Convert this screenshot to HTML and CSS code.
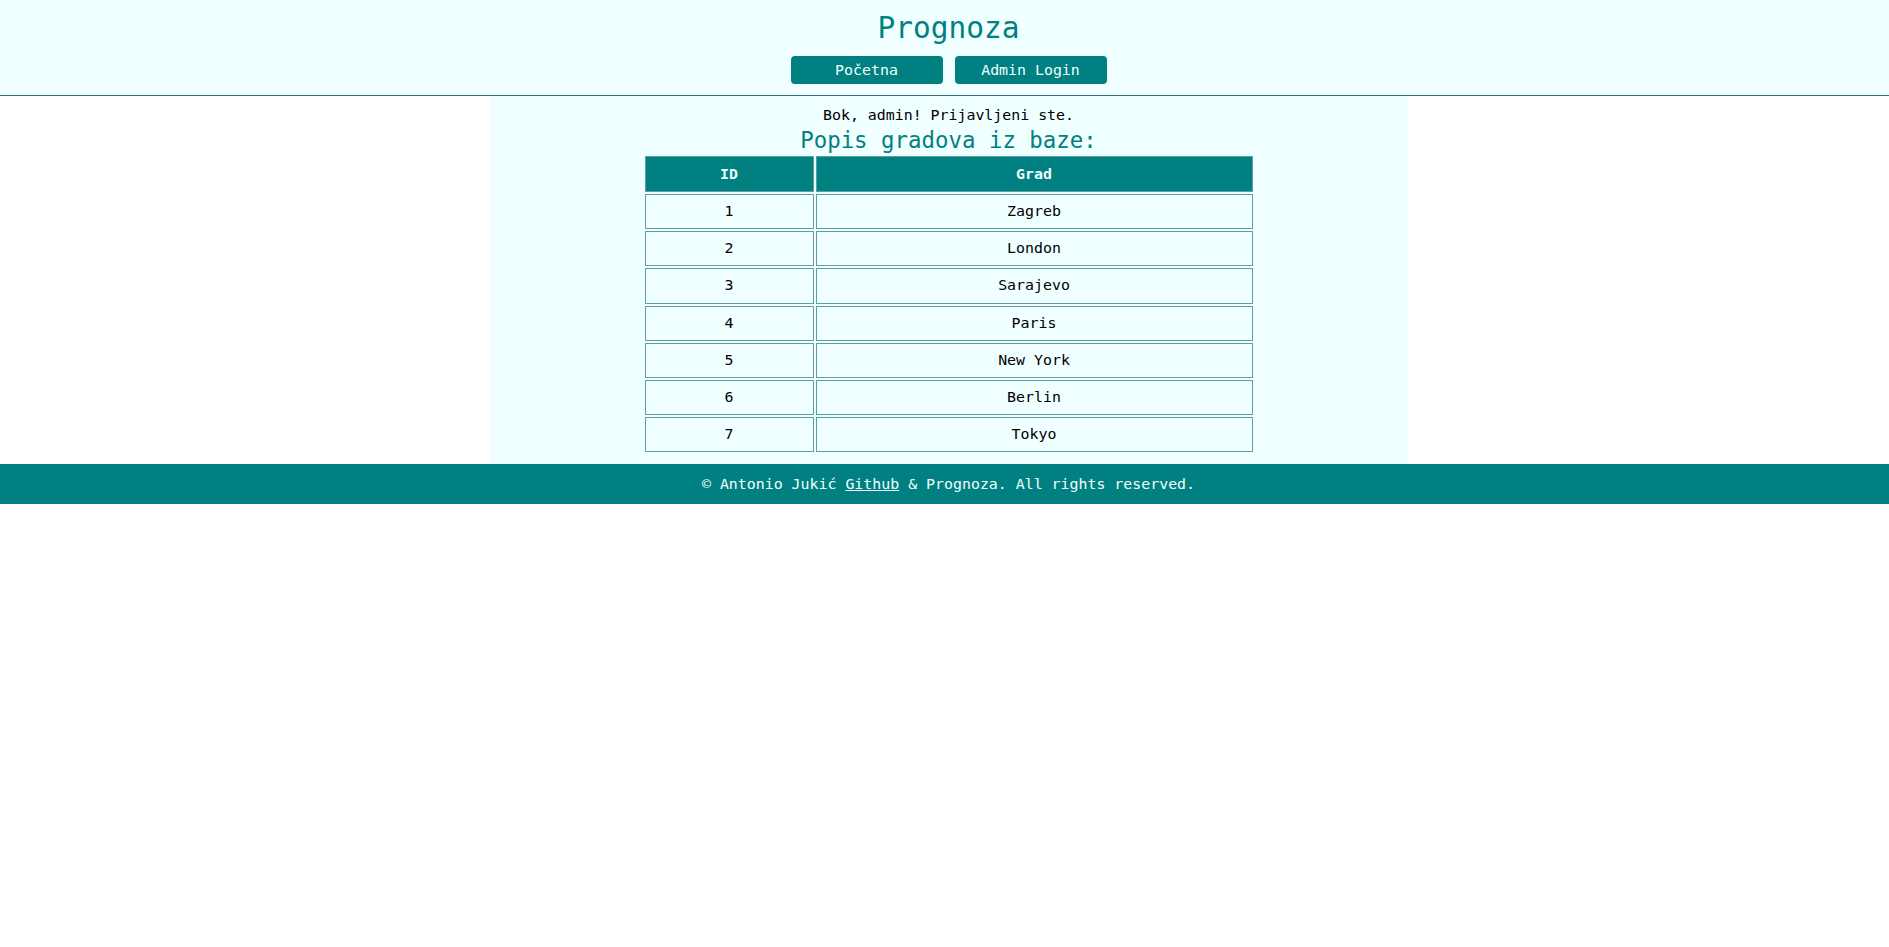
FILE: index.html
```html
<!DOCTYPE html>
<html lang="hr">
<head>
<meta charset="utf-8">
<title>Prognoza</title>
<link rel="stylesheet" href="styles.css">
</head>
<body>
<header class="site-header">
  <h1 class="site-title">Prognoza</h1>
  <nav class="nav">
    <a class="nav-btn" href="#">Početna</a>
    <a class="nav-btn" href="#">Admin Login</a>
  </nav>
</header>
<main class="panel">
  <p class="greeting">Bok, admin! Prijavljeni ste.</p>
  <h2 class="panel-title">Popis gradova iz baze:</h2>
  <table class="cities">
    <colgroup>
      <col class="col-id">
      <col class="col-city">
    </colgroup>
    <thead>
      <tr><th>ID</th><th>Grad</th></tr>
    </thead>
    <tbody>
      <tr><td>1</td><td>Zagreb</td></tr>
      <tr><td>2</td><td>London</td></tr>
      <tr><td>3</td><td>Sarajevo</td></tr>
      <tr><td>4</td><td>Paris</td></tr>
      <tr><td>5</td><td>New York</td></tr>
      <tr><td>6</td><td>Berlin</td></tr>
      <tr><td>7</td><td>Tokyo</td></tr>
    </tbody>
  </table>
</main>
<footer class="site-footer">
  © Antonio Jukić <a class="footer-link" href="#">Github</a> &amp; Prognoza. All rights reserved.
</footer>
</body>
</html>
```

FILE: styles.css
```css
html, body {
  margin: 0;
  padding: 0;
  background: #ffffff;
}

body {
  font-family: "DejaVu Sans Mono", "Liberation Mono", monospace;
  font-size: 14.9px;
  color: #000000;
}

.site-header {
  background: #f0ffff;
  border-bottom: 1px solid #2f6f6f;
  padding: 11px 0 11px 8px;
  display: flex;
  flex-direction: column;
  align-items: center;
}

.site-title {
  margin: 0;
  font-size: 29.5px;
  line-height: 34px;
  font-weight: normal;
  color: #008080;
}

.nav {
  margin-top: 11px;
  display: flex;
  gap: 12px;
}

.nav-btn {
  display: flex;
  align-items: center;
  justify-content: center;
  width: 152px;
  height: 28px;
  border-radius: 4px;
  background: #008080;
  color: #f0ffff;
  text-decoration: none;
  font-size: 14.9px;
}

.panel {
  width: 918px;
  margin: 0 auto;
  position: relative;
  left: 4px;
  background: #f0ffff;
  padding: 10px 0 10px;
  display: flex;
  flex-direction: column;
  align-items: center;
}

.greeting {
  margin: 0;
  line-height: 19px;
}

.panel-title {
  margin: 1px 0 0;
  font-size: 22.4px;
  line-height: 28px;
  font-weight: normal;
  color: #008080;
}

.cities {
  width: 612px;
  table-layout: fixed;
  border-collapse: separate;
  border-spacing: 2px;
}

.col-id { width: 169px; }
.col-city { width: 437px; }

.cities th,
.cities td {
  border: 1px solid #5f9ea0;
  padding: 0;
  text-align: center;
}

.cities th {
  background: #008080;
  color: #f0ffff;
  font-weight: bold;
  line-height: 34px;
}

.cities td {
  background: #f0ffff;
  line-height: 33.2px;
}

.site-footer {
  background: #008080;
  color: #f0ffff;
  height: 40px;
  line-height: 40px;
  text-align: center;
  font-size: 14.9px;
  padding-left: 8px;
}

.footer-link {
  color: #f0ffff;
  text-decoration: underline;
}
```
